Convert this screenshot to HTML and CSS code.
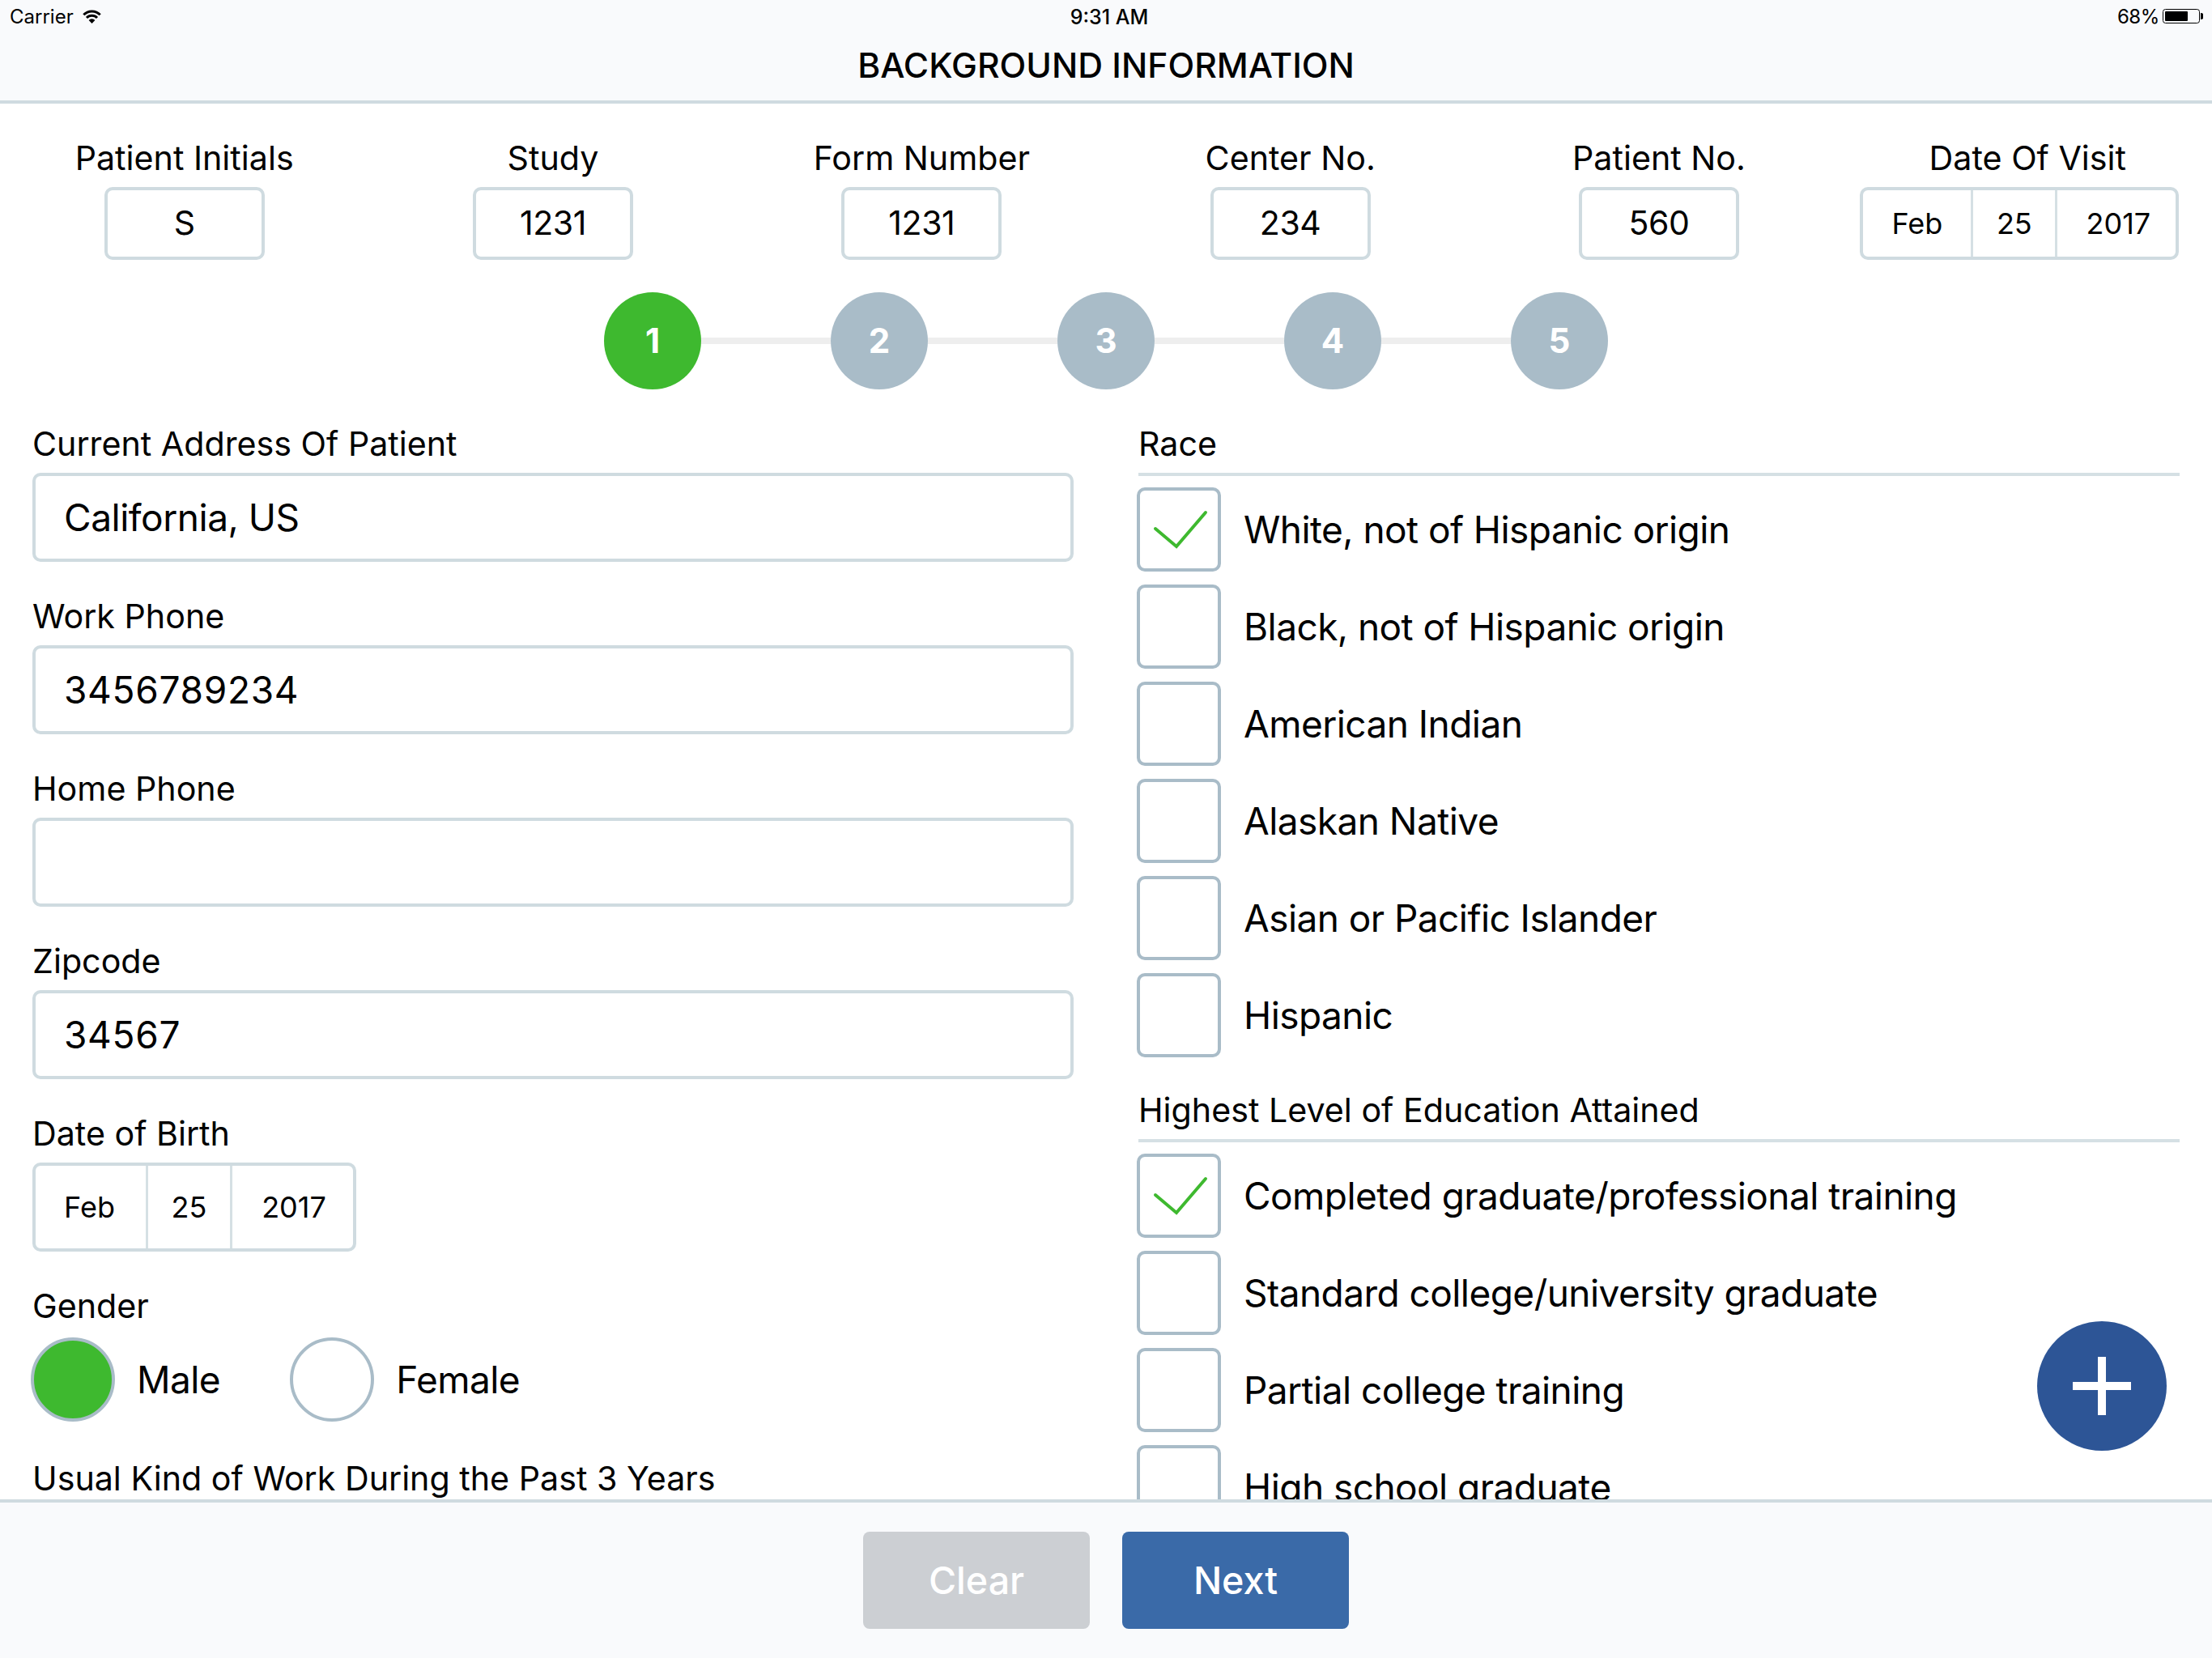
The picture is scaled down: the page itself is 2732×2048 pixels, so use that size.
FILE: index.html
```html
<!DOCTYPE html>
<html lang="en">
<head>
<meta charset="utf-8">
<title>Background Information</title>
<link rel="stylesheet" href="styles.css">
</head>
<body>
<div class="app">
  <header class="topbar">
    <div class="status">
      <div class="status-left">
        <span>Carrier</span>
        <svg class="wifi" viewBox="0 0 25 17" aria-hidden="true">
          <path d="M2.3 6.3A14.2 14.2 0 0 1 22.7 6.3" fill="none" stroke="#000" stroke-width="3"/>
          <path d="M6 10A9 9 0 0 1 19 10" fill="none" stroke="#000" stroke-width="3"/>
          <path d="M12.5 17L8.6 13A5.4 5.4 0 0 1 16.4 13Z" fill="#000"/>
        </svg>
      </div>
      <div class="status-time">9:31 AM</div>
      <div class="status-right">
        <span class="pct">68%</span>
        <svg class="battery" viewBox="0 0 50 18" aria-hidden="true">
          <rect x="0.5" y="0.5" width="45" height="17" rx="3" fill="none" stroke="#000" stroke-width="1"/>
          <rect x="3" y="3" width="28" height="12" rx="1" fill="#000"/>
          <path d="M47 5A4 4 0 0 1 47 13Z" fill="#000"/>
        </svg>
      </div>
    </div>
    <h1 class="title">BACKGROUND INFORMATION</h1>
  </header>

  <main class="content">
    <section class="summary">
      <div class="summary-col"><div class="summary-label">Patient Initials</div><div class="summary-box">S</div></div>
      <div class="summary-col"><div class="summary-label">Study</div><div class="summary-box">1231</div></div>
      <div class="summary-col"><div class="summary-label">Form Number</div><div class="summary-box">1231</div></div>
      <div class="summary-col"><div class="summary-label">Center No.</div><div class="summary-box">234</div></div>
      <div class="summary-col"><div class="summary-label">Patient No.</div><div class="summary-box">560</div></div>
      <div class="summary-col">
        <div class="summary-label">Date Of Visit</div>
        <div class="date date-small date-visit"><span class="seg-m">Feb</span><span class="seg-d">25</span><span class="seg-y">2017</span></div>
      </div>
    </section>

    <nav class="steps">
      <span class="step step-active">1</span><span class="step-line"></span>
      <span class="step">2</span><span class="step-line"></span>
      <span class="step">3</span><span class="step-line"></span>
      <span class="step">4</span><span class="step-line"></span>
      <span class="step">5</span>
    </nav>

    <div class="columns">
      <div class="col">
        <div class="field"><div class="label">Current Address Of Patient</div><div class="input">California, US</div></div>
        <div class="field"><div class="label">Work Phone</div><div class="input input-num">3456789234</div></div>
        <div class="field"><div class="label">Home Phone</div><div class="input"></div></div>
        <div class="field"><div class="label">Zipcode</div><div class="input input-num">34567</div></div>
        <div class="field"><div class="label">Date of Birth</div>
          <div class="date date-large"><span class="seg-m">Feb</span><span class="seg-d">25</span><span class="seg-y">2017</span></div>
        </div>
        <div class="field"><div class="label">Gender</div>
          <div class="radios">
            <div class="radio-opt"><span class="radio radio-on"></span><span class="opt-text">Male</span></div>
            <div class="radio-opt"><span class="radio"></span><span class="opt-text">Female</span></div>
          </div>
        </div>
        <div class="field"><div class="label">Usual Kind of Work During the Past 3 Years</div></div>
      </div>

      <div class="col">
        <div class="group">
          <div class="label">Race</div>
          <div class="rule"></div>
          <div class="checks">
            <div class="check-row"><span class="check"><svg class="tick" viewBox="0 0 104 104" aria-hidden="true"><path d="M23 51L49 73L85 31"/></svg></span><span class="opt-text">White, not of Hispanic origin</span></div>
            <div class="check-row"><span class="check"></span><span class="opt-text">Black, not of Hispanic origin</span></div>
            <div class="check-row"><span class="check"></span><span class="opt-text">American Indian</span></div>
            <div class="check-row"><span class="check"></span><span class="opt-text">Alaskan Native</span></div>
            <div class="check-row"><span class="check"></span><span class="opt-text">Asian or Pacific Islander</span></div>
            <div class="check-row"><span class="check"></span><span class="opt-text">Hispanic</span></div>
          </div>
        </div>
        <div class="group group-next">
          <div class="label">Highest Level of Education Attained</div>
          <div class="rule"></div>
          <div class="checks">
            <div class="check-row"><span class="check"><svg class="tick" viewBox="0 0 104 104" aria-hidden="true"><path d="M23 51L49 73L85 31"/></svg></span><span class="opt-text">Completed graduate/professional training</span></div>
            <div class="check-row"><span class="check"></span><span class="opt-text">Standard college/university graduate</span></div>
            <div class="check-row"><span class="check"></span><span class="opt-text">Partial college training</span></div>
            <div class="check-row"><span class="check"></span><span class="opt-text">High school graduate</span></div>
          </div>
        </div>
      </div>
    </div>

    <button class="fab" aria-label="Add">
      <svg viewBox="0 0 72 72" aria-hidden="true"><path d="M31 0h10v31h31v10H41v31H31V41H0V31h31z" fill="#fff"/></svg>
    </button>
  </main>

  <footer class="footer">
    <button class="btn btn-clear">Clear</button>
    <button class="btn btn-next">Next</button>
  </footer>
</div>
</body>
</html>
```
FILE: styles.css
```css
* { box-sizing: border-box; }
html, body { margin: 0; padding: 0; }
body {
  width: 2732px;
  height: 2048px;
  overflow: hidden;
  background: #fff;
  color: #000;
  font-family: Inter, "Liberation Sans", sans-serif;
}
.app { display: flex; flex-direction: column; height: 2048px; }

/* top bar */
.topbar {
  height: 128px;
  flex: none;
  background: #f9fafc;
  border-bottom: 4px solid #cfdbe0;
}
.status {
  height: 40px;
  display: grid;
  grid-template-columns: 1fr auto 1fr;
  align-items: center;
  padding: 2px 11px 0 12px;
  font-size: 24px;
  line-height: 38px;
}
.status-left { display: flex; align-items: center; gap: 10px; }
.status-right { display: flex; align-items: center; justify-content: flex-end; gap: 4px; }
.status-time { margin-left: 7px; font-size: 25px; font-weight: 500; }
.pct { letter-spacing: -0.4px; }
.wifi { width: 25px; height: 17px; margin-top: -2px; }
.battery { width: 50px; height: 18px; margin-top: -2px; }
.title {
  margin: 0;
  height: 84px;
  padding-bottom: 3px;
  font-size: 42.7px;
  line-height: 81px;
  font-weight: 500;
  text-align: center;
}

/* content */
.content { position: relative; flex: 1; min-height: 0; overflow: hidden; padding-top: 42px; }

.summary { display: grid; grid-template-columns: repeat(6, 1fr); }
.summary-col { display: flex; flex-direction: column; align-items: center; }
.summary-label { font-size: 41.2px; line-height: 50px; }
.summary-box {
  width: 198px;
  height: 90px;
  margin-top: 11px;
  border: 4px solid #cfdbe0;
  border-radius: 10px;
  font-size: 41px;
  letter-spacing: -0.4px;
  line-height: 81px;
  text-align: center;
}

.date {
  display: flex;
  border: 4px solid #cfdbe0;
  border-radius: 10px;
  font-size: 36px;
  text-align: center;
}
.date span { display: block; }
.seg-d { width: 104px; border-left: 3px solid #d5e0e4; }
.seg-y { flex: 1; border-left: 3px solid #d5e0e4; }
.date-small { width: 394px; height: 90px; line-height: 82px; margin-top: 11px; }
.date-small .seg-m { width: 133px; }
.date-small .seg-y { padding-left: 4px; }
.date-visit { margin-left: -20px; }
.date-large { width: 400px; height: 110px; line-height: 102px; }
.date-large .seg-m { width: 136px; padding-right: 3px; }
.date-large .seg-y { padding-left: 3px; }

.steps {
  display: flex;
  align-items: center;
  justify-content: center;
  margin-top: 40px;
}
.step {
  width: 120px;
  height: 120px;
  border-radius: 50%;
  background: #a9bcc8;
  color: #fff;
  font-size: 42px;
  font-weight: 700;
  line-height: 120px;
  text-align: center;
}
.step-active { background: #3eb92f; }
.step-line { width: 160px; height: 8px; background: #eeeeee; }

.columns {
  display: grid;
  grid-template-columns: 1fr 1fr;
  gap: 80px;
  padding: 0 40px;
  margin-top: 42px;
}
.label { font-size: 41.2px; line-height: 50px; }
.field { margin-bottom: 42px; }
.field .label { margin-bottom: 11px; }
.input {
  height: 110px;
  padding-left: 35px;
  border: 4px solid #cfdbe0;
  border-radius: 10px;
  font-size: 46px;
  letter-spacing: -0.46px;
  line-height: 102px;
}
.input-num { letter-spacing: 0.7px; }

.opt-text { font-size: 46px; letter-spacing: -0.55px; line-height: 104px; white-space: nowrap; }

.radios { display: flex; align-items: center; height: 110px; margin-left: -2px; }
.radio-opt { display: flex; align-items: center; gap: 27px; margin-right: 86px; }
.radio {
  width: 104px;
  height: 104px;
  border: 4px solid #a9bcc8;
  border-radius: 50%;
}
.radio-on { background: #3eb92f; }

.rule { height: 4px; margin-top: 11px; background: #d5e0e4; }
.checks { display: flex; flex-direction: column; gap: 16px; margin-top: 14px; margin-left: -2px; }
.check-row { display: flex; align-items: center; gap: 28px; height: 104px; }
.check {
  position: relative;
  flex: none;
  width: 104px;
  height: 104px;
  border: 4px solid #a9bcc8;
  border-radius: 10px;
}
.tick { position: absolute; left: -4px; top: -4px; width: 104px; height: 104px; }
.tick path { fill: none; stroke: #3eb92f; stroke-width: 4; stroke-linecap: round; stroke-linejoin: miter; }
.group-next { margin-top: 40px; }

.fab {
  position: absolute;
  right: 56px;
  bottom: 60px;
  width: 160px;
  height: 160px;
  padding: 44px;
  border: 0;
  border-radius: 50%;
  background: #2d5596;
}
.fab svg { display: block; width: 72px; height: 72px; }

/* footer */
.footer {
  flex: none;
  height: 196px;
  display: flex;
  justify-content: center;
  gap: 40px;
  padding-top: 36px;
  background: #f9fafc;
  border-top: 4px solid #cfdbe0;
}
.btn {
  width: 280px;
  height: 120px;
  border: 0;
  border-radius: 8px;
  color: #fff;
  font-family: inherit;
  font-size: 46.6px;
  font-weight: 500;
}
.btn-clear { background: #cccfd3; }
.btn-next { background: #3a6aa8; }
```
